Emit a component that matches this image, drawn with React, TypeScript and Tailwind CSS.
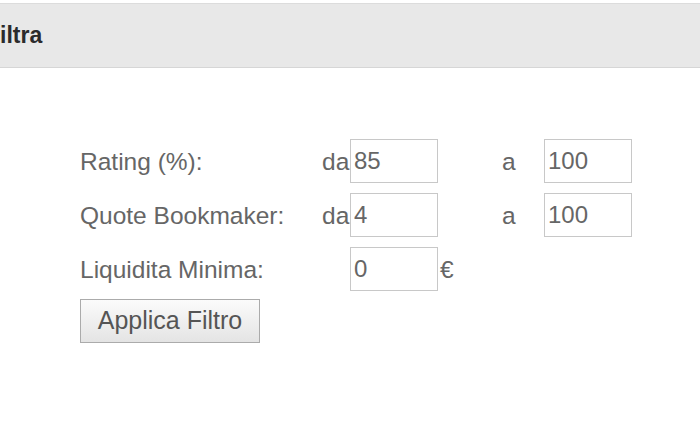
import React from 'react';

const fieldCls =
  'h-[44px] w-[88px] border border-[#c8c8c8] bg-white px-[3px] text-[24px] text-[#666] outline-none';

function Field({ value }: { value: string }) {
  return <input className={fieldCls} defaultValue={value} />;
}

export default function App() {
  return (
    <div className="h-[441px] w-[700px] overflow-hidden bg-white font-['Liberation_Sans',Arial,sans-serif]">
      {/* Header bar */}
      <div className="mt-[3px] flex h-[65px] items-center border-t border-b border-t-[#dcdcdc] border-b-[#d6d6d6] bg-[#e8e8e8]">
        <span className="ml-[-14px] text-[23px] font-bold text-[#2b2b2b]">Filtra</span>
      </div>

      {/* Filter form */}
      <div className="ml-[80px] mt-[71px]">
        <div className="grid grid-cols-[242px_28px_88px_64px_42px_88px] items-center gap-y-[10px] text-[24.5px] text-[#666]">
          <span className="pt-[2px]">Rating (%):</span>
          <span className="pt-[2px]">da</span>
          <Field value="85" />
          <span />
          <span className="pt-[2px]">a</span>
          <Field value="100" />

          <span className="pt-[2px]">Quote Bookmaker:</span>
          <span className="pt-[2px]">da</span>
          <Field value="4" />
          <span />
          <span className="pt-[2px]">a</span>
          <Field value="100" />

          <span className="pt-[2px]">Liquidita Minima:</span>
          <span />
          <Field value="0" />
          <span className="pl-[2px] pt-[2px]">€</span>
          <span />
          <span />
        </div>

        <button className="mt-[8px] h-[44px] w-[180px] border border-[#ababab] bg-gradient-to-b from-[#fbfbfb] to-[#e4e4e4] text-[25px] text-[#555]">
          Applica Filtro
        </button>
      </div>
    </div>
  );
}
